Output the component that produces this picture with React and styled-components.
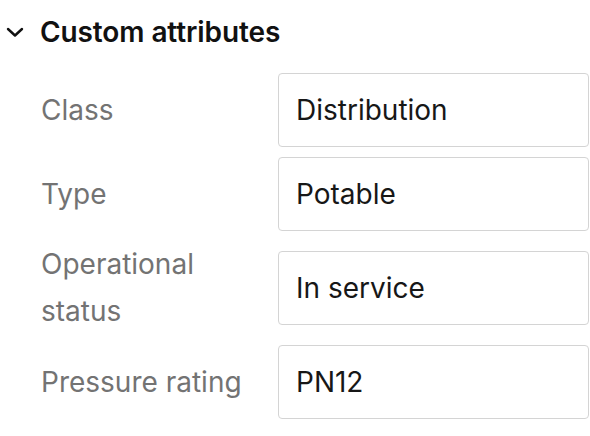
import React from 'react'
import styled, { createGlobalStyle } from 'styled-components'

const Global = createGlobalStyle`
  html, body {
    margin: 0;
    padding: 0;
    background: #ffffff;
  }
  body {
    font-family: Inter, "Noto Sans", sans-serif;
  }
`

const Section = styled.section`
  width: 590px;
  padding: 14px 0 0 0;
  box-sizing: border-box;
`

const Header = styled.button`
  display: flex;
  align-items: center;
  gap: 15px;
  border: 0;
  background: none;
  padding: 0 0 0 5px;
  height: 36px;
  cursor: pointer;
  font-family: inherit;
`

const Title = styled.span`
  font-size: 28px;
  font-weight: 600;
  color: #111111;
  letter-spacing: -0.1px;
`

const Fields = styled.div`
  display: flex;
  flex-direction: column;
  gap: 10px;
  padding: 23px 1px 0 41px;
`

const Row = styled.div`
  display: grid;
  grid-template-columns: 237px 1fr;
  align-items: center;
`

const Label = styled.label`
  font-size: 28px;
  line-height: 47px;
  color: #737373;
  padding-right: 16px;
`

const Input = styled.input`
  height: 74px;
  box-sizing: border-box;
  border: 1.5px solid #d4d4d4;
  border-radius: 4px;
  padding: 0 17px;
  font-family: inherit;
  font-size: 28px;
  color: #171717;
  background: #ffffff;
  outline: none;
  width: 100%;
`

const Chevron = () => (
  <svg width="20" height="20" viewBox="0 0 20 20" fill="none">
    <path d="M3 7 L10 13.5 L17 7" stroke="#111" strokeWidth="2.4" strokeLinecap="round" strokeLinejoin="round" />
  </svg>
)

const fields = [
  { label: 'Class', value: 'Distribution' },
  { label: 'Type', value: 'Potable' },
  { label: 'Operational status', value: 'In service' },
  { label: 'Pressure rating', value: 'PN12' },
]

export default function App() {
  return (
    <>
      <Global />
      <Section>
        <Header>
          <Chevron />
          <Title>Custom attributes</Title>
        </Header>
        <Fields>
          {fields.map((f) => (
            <Row key={f.label}>
              <Label>{f.label}</Label>
              <Input defaultValue={f.value} readOnly />
            </Row>
          ))}
        </Fields>
      </Section>
    </>
  )
}
